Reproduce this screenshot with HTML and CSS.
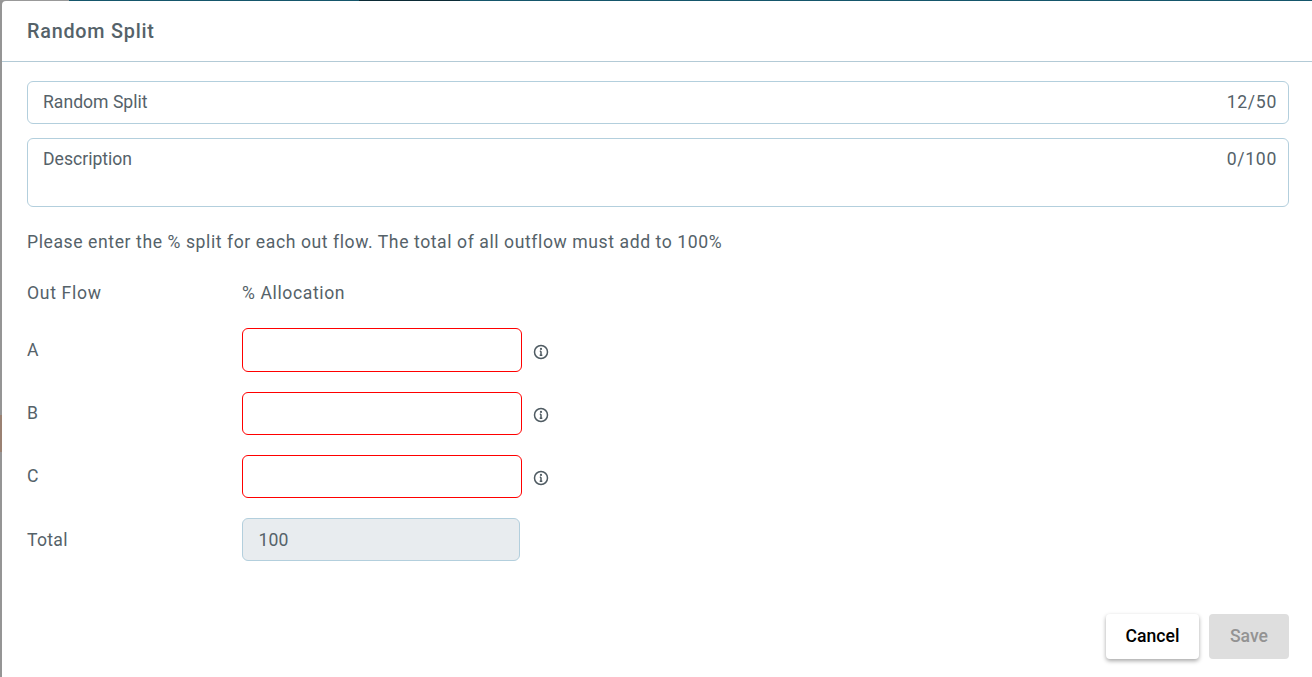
FILE: index.html
```html
<!DOCTYPE html>
<html>
<head>
  <title>Random Split</title>
  <link rel="stylesheet" href="styles.css">
</head>
<body>
  <div class="backdrop">
    <div class="backdrop-top"></div>
    <div class="modal">
      <div class="modal-header">
        <h2 class="modal-title">Random Split</h2>
      </div>

      <div class="modal-body">
        <div class="field field-name">
          <span class="field-text">Random Split</span>
          <span class="field-count">12/50</span>
        </div>
        <div class="field field-desc">
          <span class="field-text">Description</span>
          <span class="field-count">0/100</span>
        </div>

        <p class="hint">Please enter the % split for each out flow. The total of all outflow must add to 100%</p>

        <div class="split-head">
          <span class="col-label">Out Flow</span>
          <span>% Allocation</span>
        </div>

        <div class="split-row split-row-first">
          <span class="col-label">A</span>
          <div class="split-input"></div>
          <svg class="info" viewBox="0 0 16 16"><circle cx="8" cy="8" r="6.5"/><path d="M8 7.2v4M6.7 11.2h2.6M6.8 7.2H8"/><circle class="dot" cx="8" cy="4.9" r="1.1"/></svg>
        </div>
        <div class="split-row">
          <span class="col-label">B</span>
          <div class="split-input"></div>
          <svg class="info" viewBox="0 0 16 16"><circle cx="8" cy="8" r="6.5"/><path d="M8 7.2v4M6.7 11.2h2.6M6.8 7.2H8"/><circle class="dot" cx="8" cy="4.9" r="1.1"/></svg>
        </div>
        <div class="split-row">
          <span class="col-label">C</span>
          <div class="split-input"></div>
          <svg class="info" viewBox="0 0 16 16"><circle cx="8" cy="8" r="6.5"/><path d="M8 7.2v4M6.7 11.2h2.6M6.8 7.2H8"/><circle class="dot" cx="8" cy="4.9" r="1.1"/></svg>
        </div>
        <div class="split-row split-row-total">
          <span class="col-label">Total</span>
          <div class="total-input">100</div>
        </div>
      </div>

      <div class="modal-footer">
        <button class="btn btn-cancel">Cancel</button>
        <button class="btn btn-save" disabled>Save</button>
      </div>
    </div>
  </div>
</body>
</html>
```

FILE: styles.css
```css
* {
  box-sizing: border-box;
}

html,
body {
  height: 100%;
  margin: 0;
  overflow: hidden;
}

body {
  font-family: Roboto, sans-serif;
  font-size: 17.6px;
  color: #556269;
}

.backdrop {
  height: 677px;
  display: flex;
  flex-direction: column;
  background: linear-gradient(to bottom, #959595 0, #959595 415px, #9a8172 415px, #9a8172 452px, #959595 452px);
}

.backdrop-top {
  height: 1px;
  flex: none;
  background: linear-gradient(to right, #999 0, #999 69px, #15566b 69px, #15566b 359px, #0b2a35 359px, #0b2a35 460px, #15566b 460px);
}

.modal {
  flex: 1;
  margin-left: 2px;
  background: #fff;
  border-radius: 4px 0 0 0;
  display: flex;
  flex-direction: column;
}

.modal-header {
  height: 61px;
  padding: 0 25px;
  display: flex;
  align-items: center;
  border-bottom: 1px solid #b3cad6;
}

.modal-title {
  margin: 0;
  font-size: 19.8px;
  font-weight: 500;
  letter-spacing: 0.77px;
  color: #556269;
}

.modal-body {
  padding: 19px 23px 0 25px;
  flex: 1;
}

.field {
  display: flex;
  justify-content: space-between;
  padding: 0 11px 0 15px;
  border: 1px solid #b3cfdd;
  border-radius: 6px;
  line-height: 20px;
}

.field-name {
  height: 43px;
  padding-bottom: 2px;
  align-items: center;
}

.field-desc {
  height: 69px;
  margin-top: 14px;
  padding-top: 10px;
}

.field-count {
  letter-spacing: 0.7px;
}

.hint {
  margin: 25px 0 0;
  line-height: 20px;
  letter-spacing: 0.58px;
}

.split-head {
  display: flex;
  margin-top: 31px;
  line-height: 20px;
  letter-spacing: 0.6px;
}

.col-label {
  width: 215px;
  flex: none;
  margin-bottom: 2px;
  line-height: 20px;
  letter-spacing: 0.3px;
}

.split-head .col-label {
  margin-bottom: 0;
  letter-spacing: 0.67px;
}

.split-row {
  display: flex;
  align-items: center;
  margin-top: 20px;
}

.split-row-first {
  margin-top: 25px;
}

.split-row-first .col-label,
.split-row-total .col-label {
  margin-bottom: 0;
}

.split-row-first .split-input {
  height: 44px;
}

.split-input {
  width: 280px;
  height: 43px;
  border: 1px solid #f00;
  border-radius: 6px;
  background: #fff;
}

.total-input {
  width: 278px;
  height: 43px;
  padding: 0 0 0 15.5px;
  display: flex;
  align-items: center;
  background: #e8ecef;
  border: 1px solid #b3cfdd;
  border-radius: 6px;
  letter-spacing: 0.1px;
}

.info {
  width: 16px;
  height: 16px;
  margin: 3px 0 0 11px;
  fill: none;
  stroke: #4f5b62;
  stroke-width: 1.5;
}

.info .dot {
  fill: #4f5b62;
  stroke: none;
}

.modal-footer {
  display: flex;
  justify-content: flex-end;
  gap: 10px;
  padding: 0 23px 18px 0;
}

.btn {
  height: 45px;
  padding: 0 0 2px;
  border: none;
  border-radius: 4px;
  font-family: Roboto, sans-serif;
  font-size: 17.6px;
  font-weight: 500;
}

.btn-cancel {
  width: 93px;
  background: #fff;
  color: #000;
  box-shadow: 0 2px 4px rgba(0, 0, 0, 0.35);
}

.btn-save {
  width: 80px;
  background: #dedede;
  color: #939393;
}
```
